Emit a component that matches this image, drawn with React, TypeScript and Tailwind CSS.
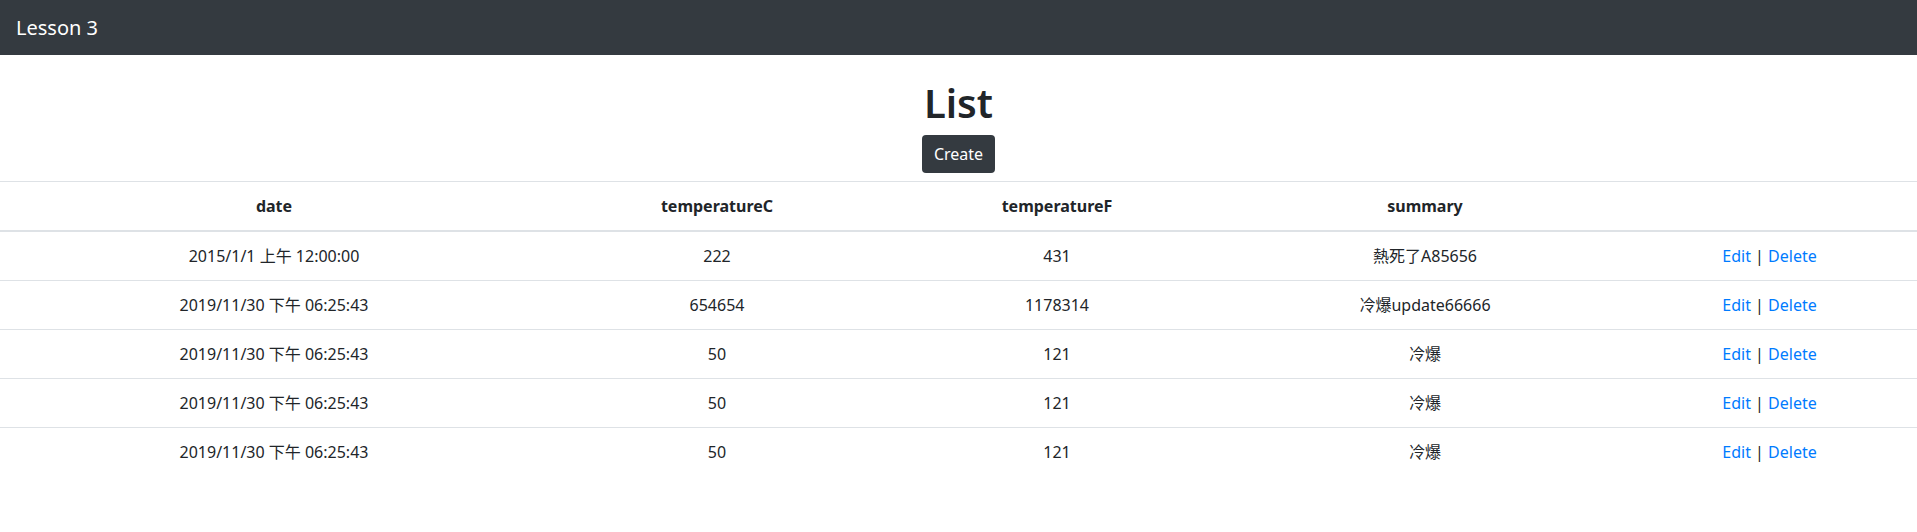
type Forecast = {
  date: string;
  temperatureC: number;
  temperatureF: number;
  summary: string;
};

const forecasts: Forecast[] = [
  { date: "2015/1/1 上午 12:00:00", temperatureC: 222, temperatureF: 431, summary: "熱死了A85656" },
  { date: "2019/11/30 下午 06:25:43", temperatureC: 654654, temperatureF: 1178314, summary: "冷爆update66666" },
  { date: "2019/11/30 下午 06:25:43", temperatureC: 50, temperatureF: 121, summary: "冷爆" },
  { date: "2019/11/30 下午 06:25:43", temperatureC: 50, temperatureF: 121, summary: "冷爆" },
  { date: "2019/11/30 下午 06:25:43", temperatureC: 50, temperatureF: 121, summary: "冷爆" },
];

const font = "font-['Noto_Sans','Noto_Sans_CJK_TC',sans-serif]";

const App = () => {
  return (
    <div className={`${font} min-h-[532px] bg-white text-base text-[#212529]`}>
      <nav className="flex h-[55px] items-center bg-[#343a40] px-4">
        <span className="text-xl text-white">Lesson 3</span>
      </nav>

      <main className="pt-6">
        <h1 className="mb-2 text-center text-[40px] leading-[48px] font-semibold">List</h1>
        <div className="mb-2 flex justify-center">
          <button
            type="button"
            className="h-[38px] rounded bg-[#343a40] px-3 text-base leading-6 text-white"
          >
            Create
          </button>
        </div>

        <table className="w-full table-fixed border-collapse text-center">
          <colgroup>
            <col className="w-[548px]" />
            <col className="w-[338px]" />
            <col className="w-[342px]" />
            <col className="w-[394px]" />
            <col className="w-[295px]" />
          </colgroup>
          <thead>
            <tr className="border-t border-[#dee2e6]">
              <th className="border-b-2 border-[#dee2e6] p-3 leading-6 font-bold">date</th>
              <th className="border-b-2 border-[#dee2e6] p-3 leading-6 font-bold">temperatureC</th>
              <th className="border-b-2 border-[#dee2e6] p-3 leading-6 font-bold">temperatureF</th>
              <th className="border-b-2 border-[#dee2e6] p-3 leading-6 font-bold">summary</th>
              <th className="border-b-2 border-[#dee2e6] p-3 leading-6" />
            </tr>
          </thead>
          <tbody>
            {forecasts.map((f, i) => (
              <tr key={i} className={i > 0 ? "border-t border-[#dee2e6]" : ""}>
                <td className="p-3 leading-6">{f.date}</td>
                <td className="p-3 leading-6">{f.temperatureC}</td>
                <td className="p-3 leading-6">{f.temperatureF}</td>
                <td className="p-3 leading-6">{f.summary}</td>
                <td className="p-3 leading-6">
                  <a href="#" className="text-[#007bff]">Edit</a> |{" "}
                  <a href="#" className="text-[#007bff]">Delete</a>
                </td>
              </tr>
            ))}
          </tbody>
        </table>
      </main>
    </div>
  );
};

export default App;
